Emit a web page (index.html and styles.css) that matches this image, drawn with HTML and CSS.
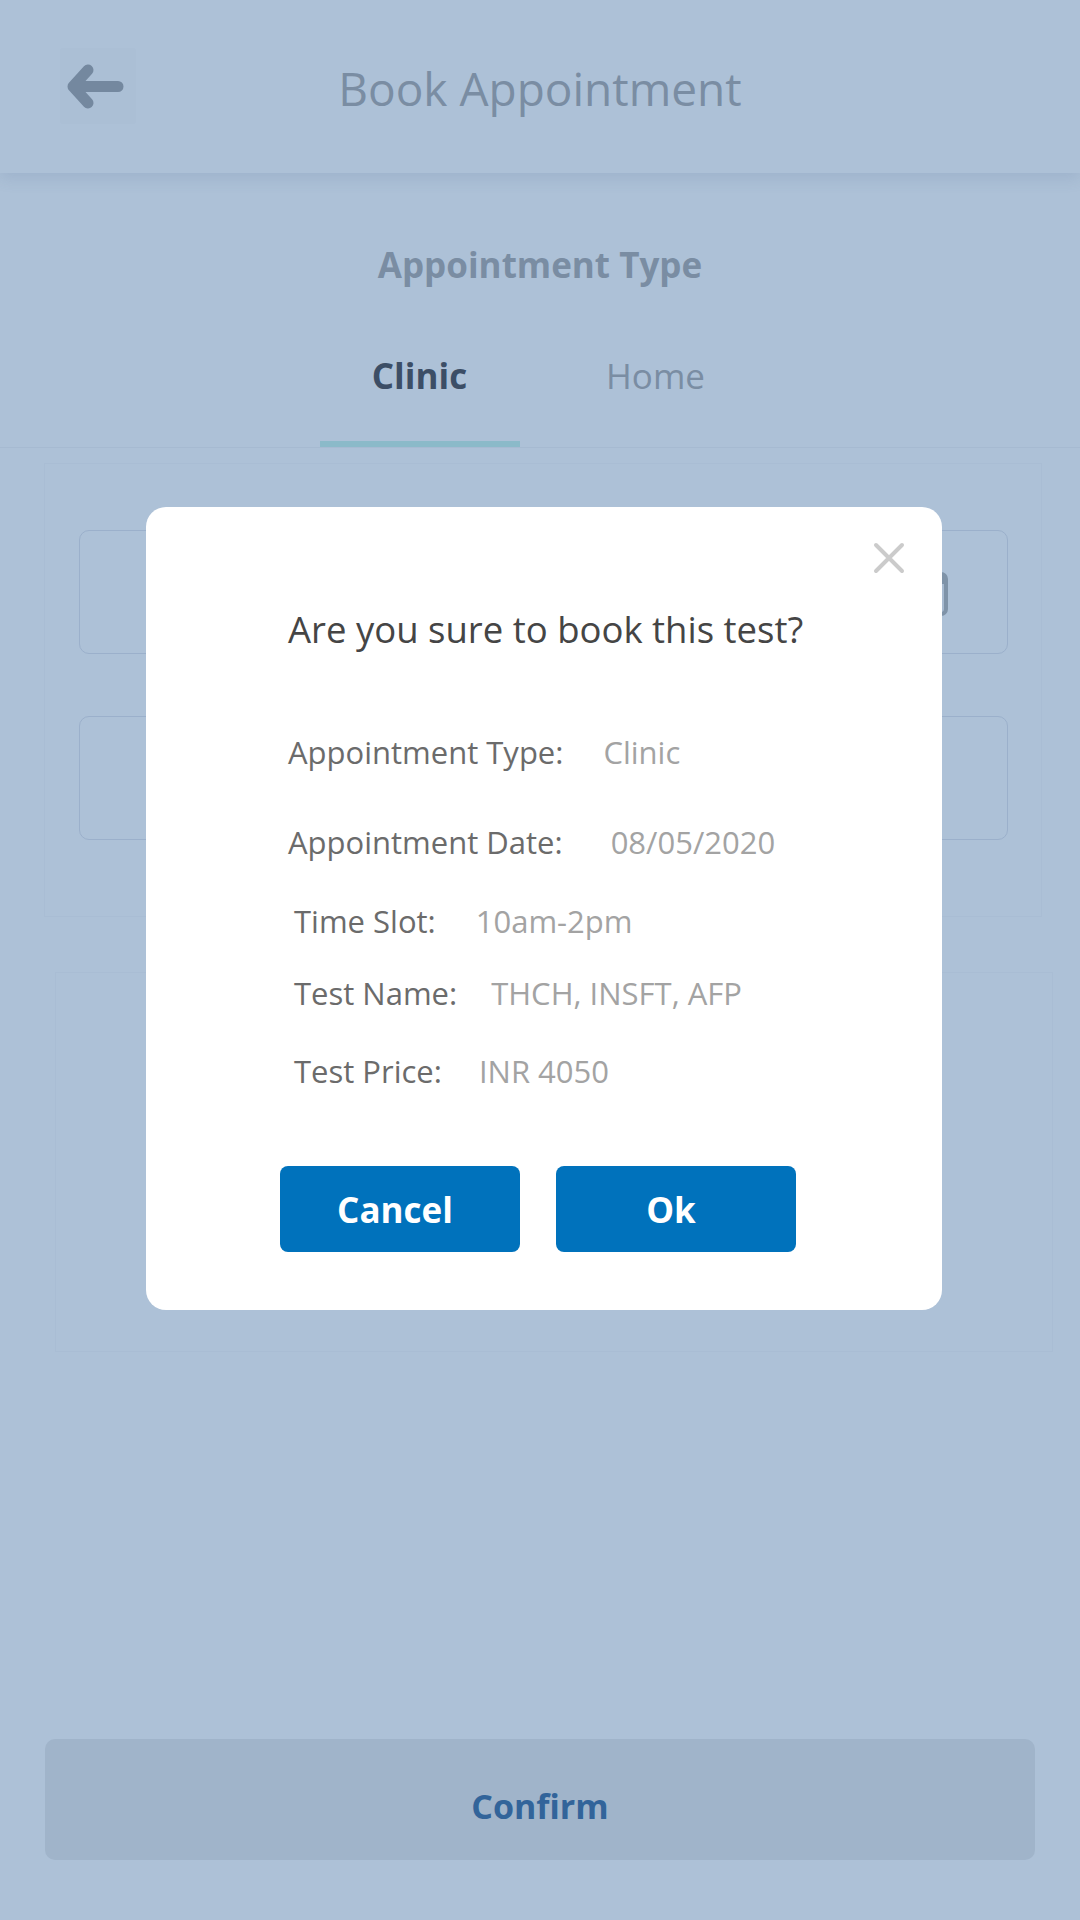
FILE: index.html
```html
<!DOCTYPE html>
<html lang="en">
<head>
<meta charset="utf-8">
<title>Book Appointment</title>
<link rel="stylesheet" href="styles.css">
</head>
<body>
<div class="screen">
  <header class="topbar">
    <div class="back">
      <svg width="76" height="76" viewBox="0 0 76 76"><path d="M28 22 L13 38.5 L28 55 M13 38.5 H58" fill="none" stroke="#74889f" stroke-width="11" stroke-linecap="round" stroke-linejoin="round"/></svg>
    </div>
    <h1 class="title">Book Appointment</h1>
    <div></div>
  </header>

  <div class="type-label">Appointment Type</div>
  <div class="tabs">
    <div class="tab active">Clinic</div>
    <div class="tab">Home</div>
  </div>

  <div class="card">
    <div class="field">
      <svg class="cal" width="40" height="48" viewBox="0 0 40 48"><rect x="2" y="6" width="36" height="40" rx="5" fill="#a7bad0" stroke="#7f93a8" stroke-width="4"/><rect x="2" y="6" width="36" height="10" fill="#7f93a8"/></svg>
    </div>
    <div class="field"></div>
  </div>

  <div class="card2"></div>

  <button class="confirm">Confirm</button>
</div>

<div class="modal">
  <svg class="close" width="32" height="32" viewBox="0 0 32 32"><path d="M3 3 L29 29 M29 3 L3 29" stroke="#cbcbcb" stroke-width="4" stroke-linecap="round"/></svg>
  <div class="modal-title">Are you sure to book this test?</div>
  <div class="rows">
    <div class="row"><span class="label">Appointment Type:</span><span class="value">Clinic</span></div>
    <div class="row wide"><span class="label">Appointment Date:</span><span class="value">08/05/2020</span></div>
    <div class="row indent"><span class="label">Time Slot:</span><span class="value">10am-2pm</span></div>
    <div class="row indent narrow"><span class="label">Test Name:</span><span class="value">THCH, INSFT, AFP</span></div>
    <div class="row indent mid"><span class="label">Test Price:</span><span class="value">INR 4050</span></div>
  </div>
  <div class="actions">
    <button class="btn">Cancel</button>
    <button class="btn">Ok</button>
  </div>
</div>
</body>
</html>
```
FILE: styles.css
```css
* { box-sizing: border-box; margin: 0; padding: 0; }
html, body { width: 1080px; height: 1920px; }
body {
  background: #adc1d7;
  font-family: "Open Sans", "Noto Sans", sans-serif;
  position: relative;
  overflow: hidden;
}
.screen { display: flex; flex-direction: column; height: 1920px; }

.topbar {
  height: 173px;
  display: grid;
  grid-template-columns: 1fr auto 1fr;
  align-items: center;
  box-shadow: 0 6px 14px rgba(70, 100, 140, 0.14);
  position: relative;
  z-index: 1;
  background: #adc1d7;
}
.back {
  width: 76px; height: 76px;
  margin-left: 60px;
  margin-top: -2px;
  background: rgba(120, 140, 170, 0.025);
  border-radius: 3px;
}
.back svg { display: block; }
.title {
  font-size: 46px;
  font-weight: 400;
  line-height: 60px;
  color: #7a8da3;
  padding-top: 2px;
}

.type-label {
  text-align: center;
  font-weight: 700;
  font-size: 35px;
  line-height: 50px;
  color: #7a8da3;
  margin-top: 67px;
}
.tabs {
  display: flex;
  justify-content: center;
  gap: 36px;
  margin-top: 61px;
  border-bottom: 1px solid #a6bad1;
  padding-right: 5px;
}
.tab {
  width: 200px;
  text-align: center;
  font-size: 35px;
  line-height: 50px;
  padding-bottom: 40px;
  border-bottom: 6px solid transparent;
  color: #7a8da3;
}
.tab.active {
  font-weight: 700;
  color: #3c4e66;
  border-bottom-color: #8bbac9;
}

.card {
  margin: 15px 38px 0 44px;
  border: 1px solid #a9bdd4;
  padding: 66px 33px 76px 34px;
  display: flex;
  flex-direction: column;
  gap: 62px;
}
.field {
  height: 124px;
  border: 1.5px solid #9bb0cb;
  border-radius: 10px;
  display: flex;
  align-items: center;
  justify-content: flex-end;
  padding-right: 59px;
}
.cal { display: block; }
.card2 {
  margin: 55px 27px 0 55px;
  height: 380px;
  border: 1px solid #a9bdd4;
}
.confirm {
  margin: auto 45px 60px 45px;
  height: 121px;
  border: none;
  border-radius: 10px;
  background: #a0b4ca;
  color: #32649a;
  font-family: inherit;
  font-weight: 700;
  font-size: 34px;
  padding-top: 12px;
}

.modal {
  position: absolute;
  left: 146px;
  top: 507px;
  width: 796px;
  height: 803px;
  background: #ffffff;
  border-radius: 20px;
  padding: 97px 0 58px 142px;
}
.close { position: absolute; top: 35px; right: 37px; display: block; }
.modal-title {
  font-size: 36.5px;
  line-height: 50px;
  color: #454545;
}
.rows { margin-top: 73px; display: flex; flex-direction: column; }
.row {
  display: flex;
  gap: 40px;
  font-size: 31px;
  line-height: 50px;
}
.row.wide { gap: 48px; }
.row.narrow { gap: 34px; }
.row.mid { gap: 37px; }
.row:nth-child(2) { margin-top: 40px; }
.row:nth-child(3) { margin-top: 29px; }
.row:nth-child(4) { margin-top: 22px; }
.row:nth-child(5) { margin-top: 28px; }
.row.indent { padding-left: 6px; }
.label { color: #6b6b6b; }
.value { color: #a3a3a3; }
.actions {
  display: flex;
  gap: 36px;
  margin-top: 70px;
  margin-left: -8px;
}
.btn {
  width: 240px;
  height: 86px;
  border: none;
  border-radius: 8px;
  background: #0072bc;
  color: #ffffff;
  font-family: inherit;
  font-weight: 700;
  font-size: 35px;
  padding-right: 10px;
}
```
